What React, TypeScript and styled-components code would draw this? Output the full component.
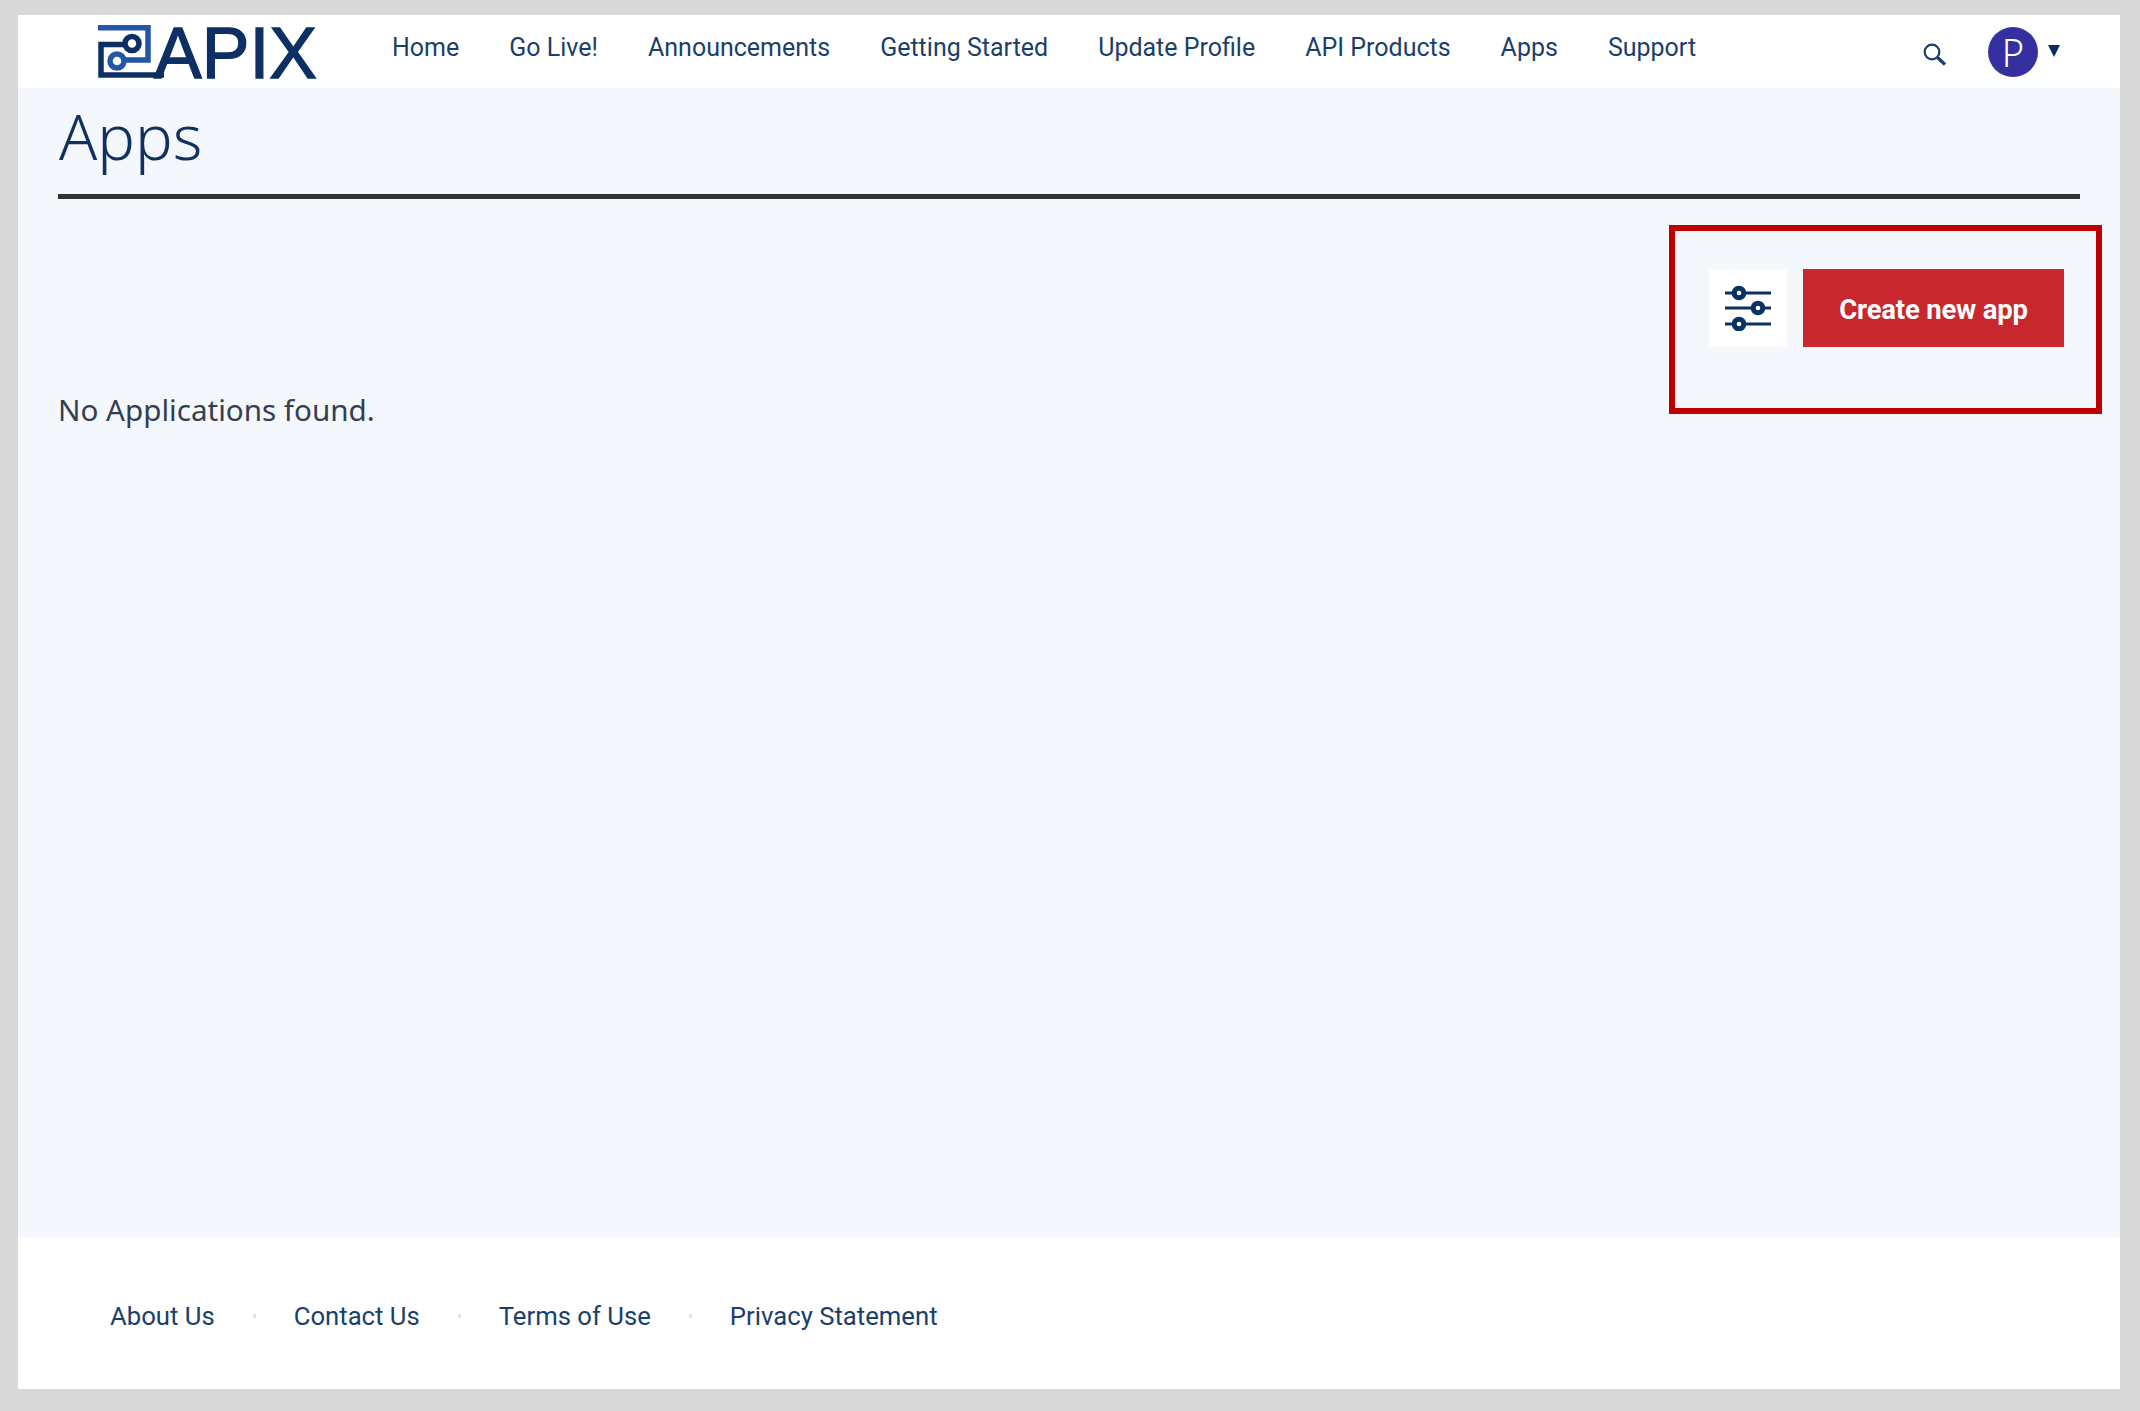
import React from 'react';
import styled, { createGlobalStyle } from 'styled-components';

const navItems = ['Home', 'Go Live!', 'Announcements', 'Getting Started', 'Update Profile', 'API Products', 'Apps', 'Support'];
const footerItems = ['About Us', 'Contact Us', 'Terms of Use', 'Privacy Statement'];

const ApixLogo: React.FC = () =>
  <LogoSvg viewBox="0 -16 224 72" aria-label="APIX">
    <g fill="none" strokeWidth="5.5">
      <path d="M0 2.8H50V35H27" stroke="#2456a6" />
      <circle cx="19" cy="36" r="7" stroke="#2456a6" />
      <path d="M26 19.5H3V50H66" stroke="#0d2f63" />
      <circle cx="34" cy="18.5" r="7" stroke="#0d2f63" />
    </g>
    <LogoText x="56" y="52.5" textLength="163" lengthAdjust="spacingAndGlyphs">APIX</LogoText>
  </LogoSvg>;

const SearchIcon: React.FC = () =>
  <svg width="28" height="28" viewBox="0 0 28 28" fill="none" stroke="#14416f">
    <circle cx="11" cy="11" r="7.3" strokeWidth="2.2" />
    <path d="M16.5 16.5L24 23.5" strokeWidth="3.2" />
  </svg>;

const SlidersIcon: React.FC = () =>
  <svg width="46" height="46" viewBox="0 0 46 46" fill="none" stroke="#0a3364">
    <path d="M0 8H46M0 23H46M0 39H46" strokeWidth="3" />
    <g fill="#fff" strokeWidth="5">
      <circle cx="14" cy="8" r="4.8" />
      <circle cx="33" cy="23" r="4.8" />
      <circle cx="14" cy="39" r="4.8" />
    </g>
  </svg>;

const App: React.FC = () =>
  <>
    <GlobalStyle />
    <Frame>
      <Header>
        <ApixLogo />
        <Nav>
          {navItems.map(item => <NavLink key={item}>{item}</NavLink>)}
        </Nav>
        <SearchButton><SearchIcon /></SearchButton>
        <Avatar>P</Avatar>
        <Caret />
      </Header>
      <Main>
        <Title>Apps</Title>
        <Actions>
          <FilterButton><SlidersIcon /></FilterButton>
          <CreateButton>Create new app</CreateButton>
        </Actions>
        <EmptyText>No Applications found.</EmptyText>
        <Highlight />
      </Main>
      <Footer>
        {footerItems.map((item, i) =>
          <React.Fragment key={item}>
            {i > 0 && <FooterDot />}
            <FooterLink>{item}</FooterLink>
          </React.Fragment>
        )}
      </Footer>
    </Frame>
  </>;

const GlobalStyle = createGlobalStyle`
  html, body {
    margin: 0;
    padding: 0;
    background: #d8d8d8;
  }
`;

const Frame = styled.div`
  display: flex;
  flex-direction: column;
  width: 2102px;
  height: 1374px;
  margin: 15px 0 0 18px;
  background: #fff;
  font-family: Roboto, "Liberation Sans", sans-serif;
`;

const Header = styled.header`
  display: flex;
  align-items: center;
  flex: none;
  height: 73px;
  padding-left: 80px;
  background: #fff;
`;

const LogoSvg = styled.svg`
  flex: none;
  width: 224px;
  height: 72px;
  margin-top: -13px;
  overflow: visible;
`;

const LogoText = styled.text`
  font-family: "Liberation Sans", Arial, sans-serif;
  font-size: 73px;
  fill: #0d2f63;
  stroke: #0d2f63;
  stroke-width: 1.4px;
`;

const Nav = styled.nav`
  display: flex;
  flex: 1;
  gap: 50px;
  margin: -8px 0 0 70px;
`;

const NavLink = styled.a`
  font-size: 25px;
  line-height: 32px;
  color: #1b3f6b;
  white-space: nowrap;
`;

const SearchButton = styled.div`
  display: flex;
  flex: none;
  margin: 7px 39px 0 0;
`;

const Avatar = styled.div`
  display: flex;
  align-items: center;
  justify-content: center;
  flex: none;
  width: 50px;
  height: 50px;
  border-radius: 50%;
  background: #3430a0;
  color: #fff;
  font-family: "Noto Sans", sans-serif;
  font-size: 38px;
  font-weight: 300;
  line-height: 1;
`;

const Caret = styled.div`
  flex: none;
  width: 0;
  height: 0;
  margin: -2px 60px 0 10px;
  border-left: 6.5px solid transparent;
  border-right: 6.5px solid transparent;
  border-top: 12px solid #0b2e5e;
`;

const Main = styled.main`
  position: relative;
  flex: 1;
  padding: 0 40px;
  background: #f4f7fc;
`;

const Title = styled.h1`
  height: 106px;
  margin: 0;
  padding-left: 1px;
  border-bottom: 5px solid #333;
  color: #10305f;
  font-family: "Noto Sans", sans-serif;
  font-size: 63px;
  font-weight: 300;
  line-height: 95px;
`;

const Actions = styled.div`
  display: flex;
  justify-content: flex-end;
  gap: 16px;
  margin: 70px 16px 0 0;
`;

const FilterButton = styled.button`
  display: flex;
  align-items: center;
  justify-content: center;
  width: 78px;
  height: 78px;
  padding: 0;
  border: 0;
  background: #fff;
`;

const CreateButton = styled.button`
  width: 261px;
  height: 78px;
  padding: 2px 0 0;
  border: 0;
  background: #c8272e;
  color: #fff;
  font-family: Roboto, sans-serif;
  font-size: 27.5px;
  font-weight: 700;
  letter-spacing: -.2px;
`;

const EmptyText = styled.p`
  margin: 43px 0 0;
  color: #333f50;
  font-family: "Noto Sans", sans-serif;
  font-size: 29.6px;
  line-height: 40px;
`;

const Highlight = styled.div`
  position: absolute;
  top: 137px;
  right: 18px;
  box-sizing: border-box;
  width: 433px;
  height: 189px;
  border: 6px solid #c00000;
`;

const Footer = styled.footer`
  display: flex;
  align-items: center;
  box-sizing: border-box;
  flex: none;
  height: 152px;
  padding: 6px 0 0 92px;
  background: #fff;
`;

const FooterLink = styled.a`
  color: #1b3f6b;
  font-size: 25.7px;
  line-height: 32px;
`;

const FooterDot = styled.span`
  width: 3px;
  height: 4px;
  margin: 0 38px;
  background: #dfe3e8;
`;

export default App;
